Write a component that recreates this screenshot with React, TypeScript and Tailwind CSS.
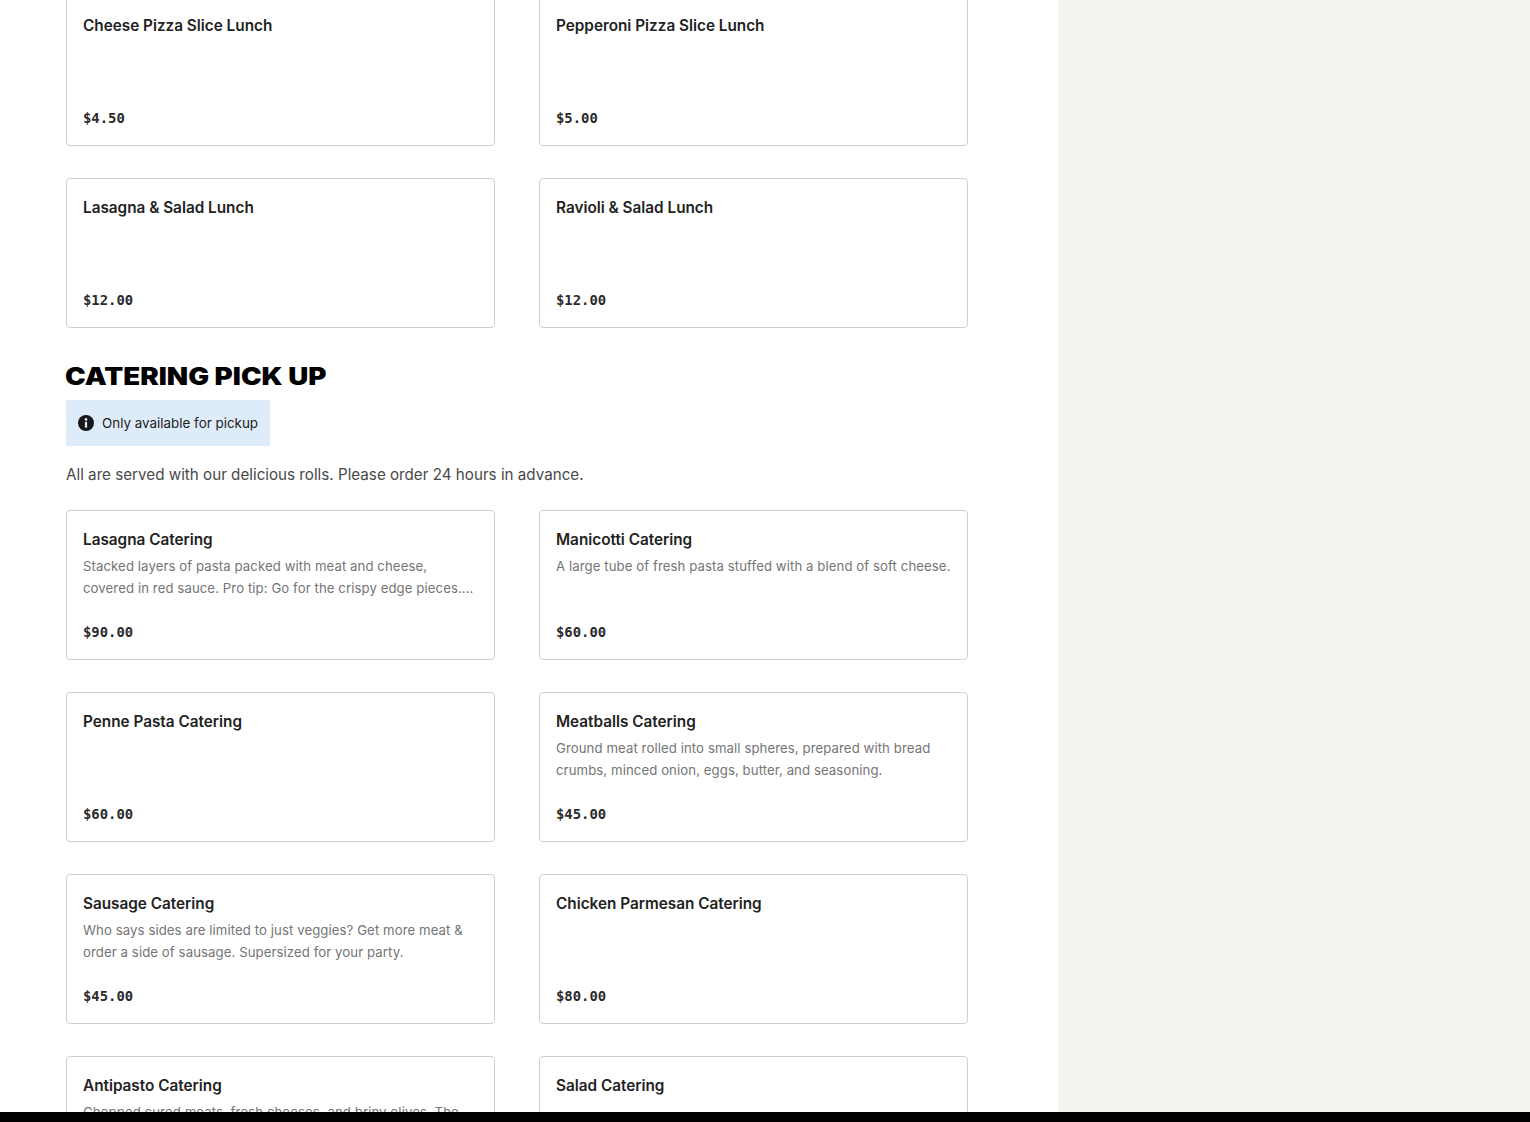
const sans = "font-['Inter','Noto_Sans',sans-serif]";

type Item = {
  name: string;
  price: string;
  desc?: string;
};

const lunch: Item[] = [
  { name: "Cheese Pizza Slice Lunch", price: "$4.50" },
  { name: "Pepperoni Pizza Slice Lunch", price: "$5.00" },
  { name: "Lasagna & Salad Lunch", price: "$12.00" },
  { name: "Ravioli & Salad Lunch", price: "$12.00" },
];

const catering: Item[] = [
  {
    name: "Lasagna Catering",
    price: "$90.00",
    desc: "Stacked layers of pasta packed with meat and cheese, covered in red sauce. Pro tip: Go for the crispy edge pieces....",
  },
  {
    name: "Manicotti Catering",
    price: "$60.00",
    desc: "A large tube of fresh pasta stuffed with a blend of soft cheese.",
  },
  { name: "Penne Pasta Catering", price: "$60.00" },
  {
    name: "Meatballs Catering",
    price: "$45.00",
    desc: "Ground meat rolled into small spheres, prepared with bread crumbs, minced onion, eggs, butter, and seasoning.",
  },
  {
    name: "Sausage Catering",
    price: "$45.00",
    desc: "Who says sides are limited to just veggies? Get more meat & order a side of sausage. Supersized for your party.",
  },
  { name: "Chicken Parmesan Catering", price: "$80.00" },
  {
    name: "Antipasto Catering",
    price: "$60.00",
    desc: "Chopped cured meats, fresh cheeses, and briny olives. The perfect starter for any gathering.",
  },
  { name: "Salad Catering", price: "$40.00" },
];

function MenuCard({ item }: { item: Item }) {
  return (
    <div className="flex h-[150px] flex-col rounded-[4px] border border-[#cfcfcf] bg-white px-4 pt-[19px] pb-[17px]">
      <h3 className="text-[15.3px] leading-5 font-semibold text-[#222222]">{item.name}</h3>
      {item.desc && (
        <p className="mt-[5px] text-[13.2px] leading-[22px] tracking-[0.08px] text-[#757575]">
          {item.desc}
        </p>
      )}
      <div className="mt-auto font-['DejaVu_Sans_Mono',monospace] text-[13.9px] leading-5 font-bold text-[#2b2b2b]">
        {item.price}
      </div>
    </div>
  );
}

function CardGrid({ items }: { items: Item[] }) {
  return (
    <div className="grid w-[902px] grid-cols-[429px_429px] gap-x-[44px] gap-y-8">
      {items.map((item) => (
        <MenuCard key={item.name} item={item} />
      ))}
    </div>
  );
}

export default function App() {
  return (
    <div className={`flex h-[1122px] flex-col overflow-hidden bg-white ${sans}`}>
      <div className="flex min-h-0 flex-1">
        <main className="w-[1058px] shrink-0 overflow-hidden pl-[66px]">
          <div className="-mt-1">
            <CardGrid items={lunch} />
          </div>

          <h2 className="mt-[34px] -ml-px origin-left scale-x-[1.155] text-[24px] leading-[30px] font-black whitespace-nowrap text-black uppercase">
            Catering Pick Up
          </h2>

          <div className="mt-2 flex h-[46px] w-[204px] items-center gap-2 bg-[#deebf9] px-3">
            <svg viewBox="0 0 16 16" className="h-4 w-4 shrink-0" aria-hidden="true">
              <circle cx="8" cy="8" r="8" fill="#17181c" />
              <circle cx="8" cy="4.4" r="1.3" fill="#deebf9" />
              <rect x="6.9" y="6.7" width="2.2" height="6" rx="0.4" fill="#deebf9" />
            </svg>
            <span className="text-[13.4px] leading-5 whitespace-nowrap text-[#222222]">
              Only available for pickup
            </span>
          </div>

          <p className="mt-[18px] mb-6 text-[15.2px] leading-[22px] text-[#494949]">
            All are served with our delicious rolls. Please order 24 hours in advance.
          </p>

          <CardGrid items={catering} />
        </main>
        <aside className="flex-1 bg-[#f4f3f0]" />
      </div>
      <div className="h-[10px] shrink-0 bg-black" />
    </div>
  );
}
